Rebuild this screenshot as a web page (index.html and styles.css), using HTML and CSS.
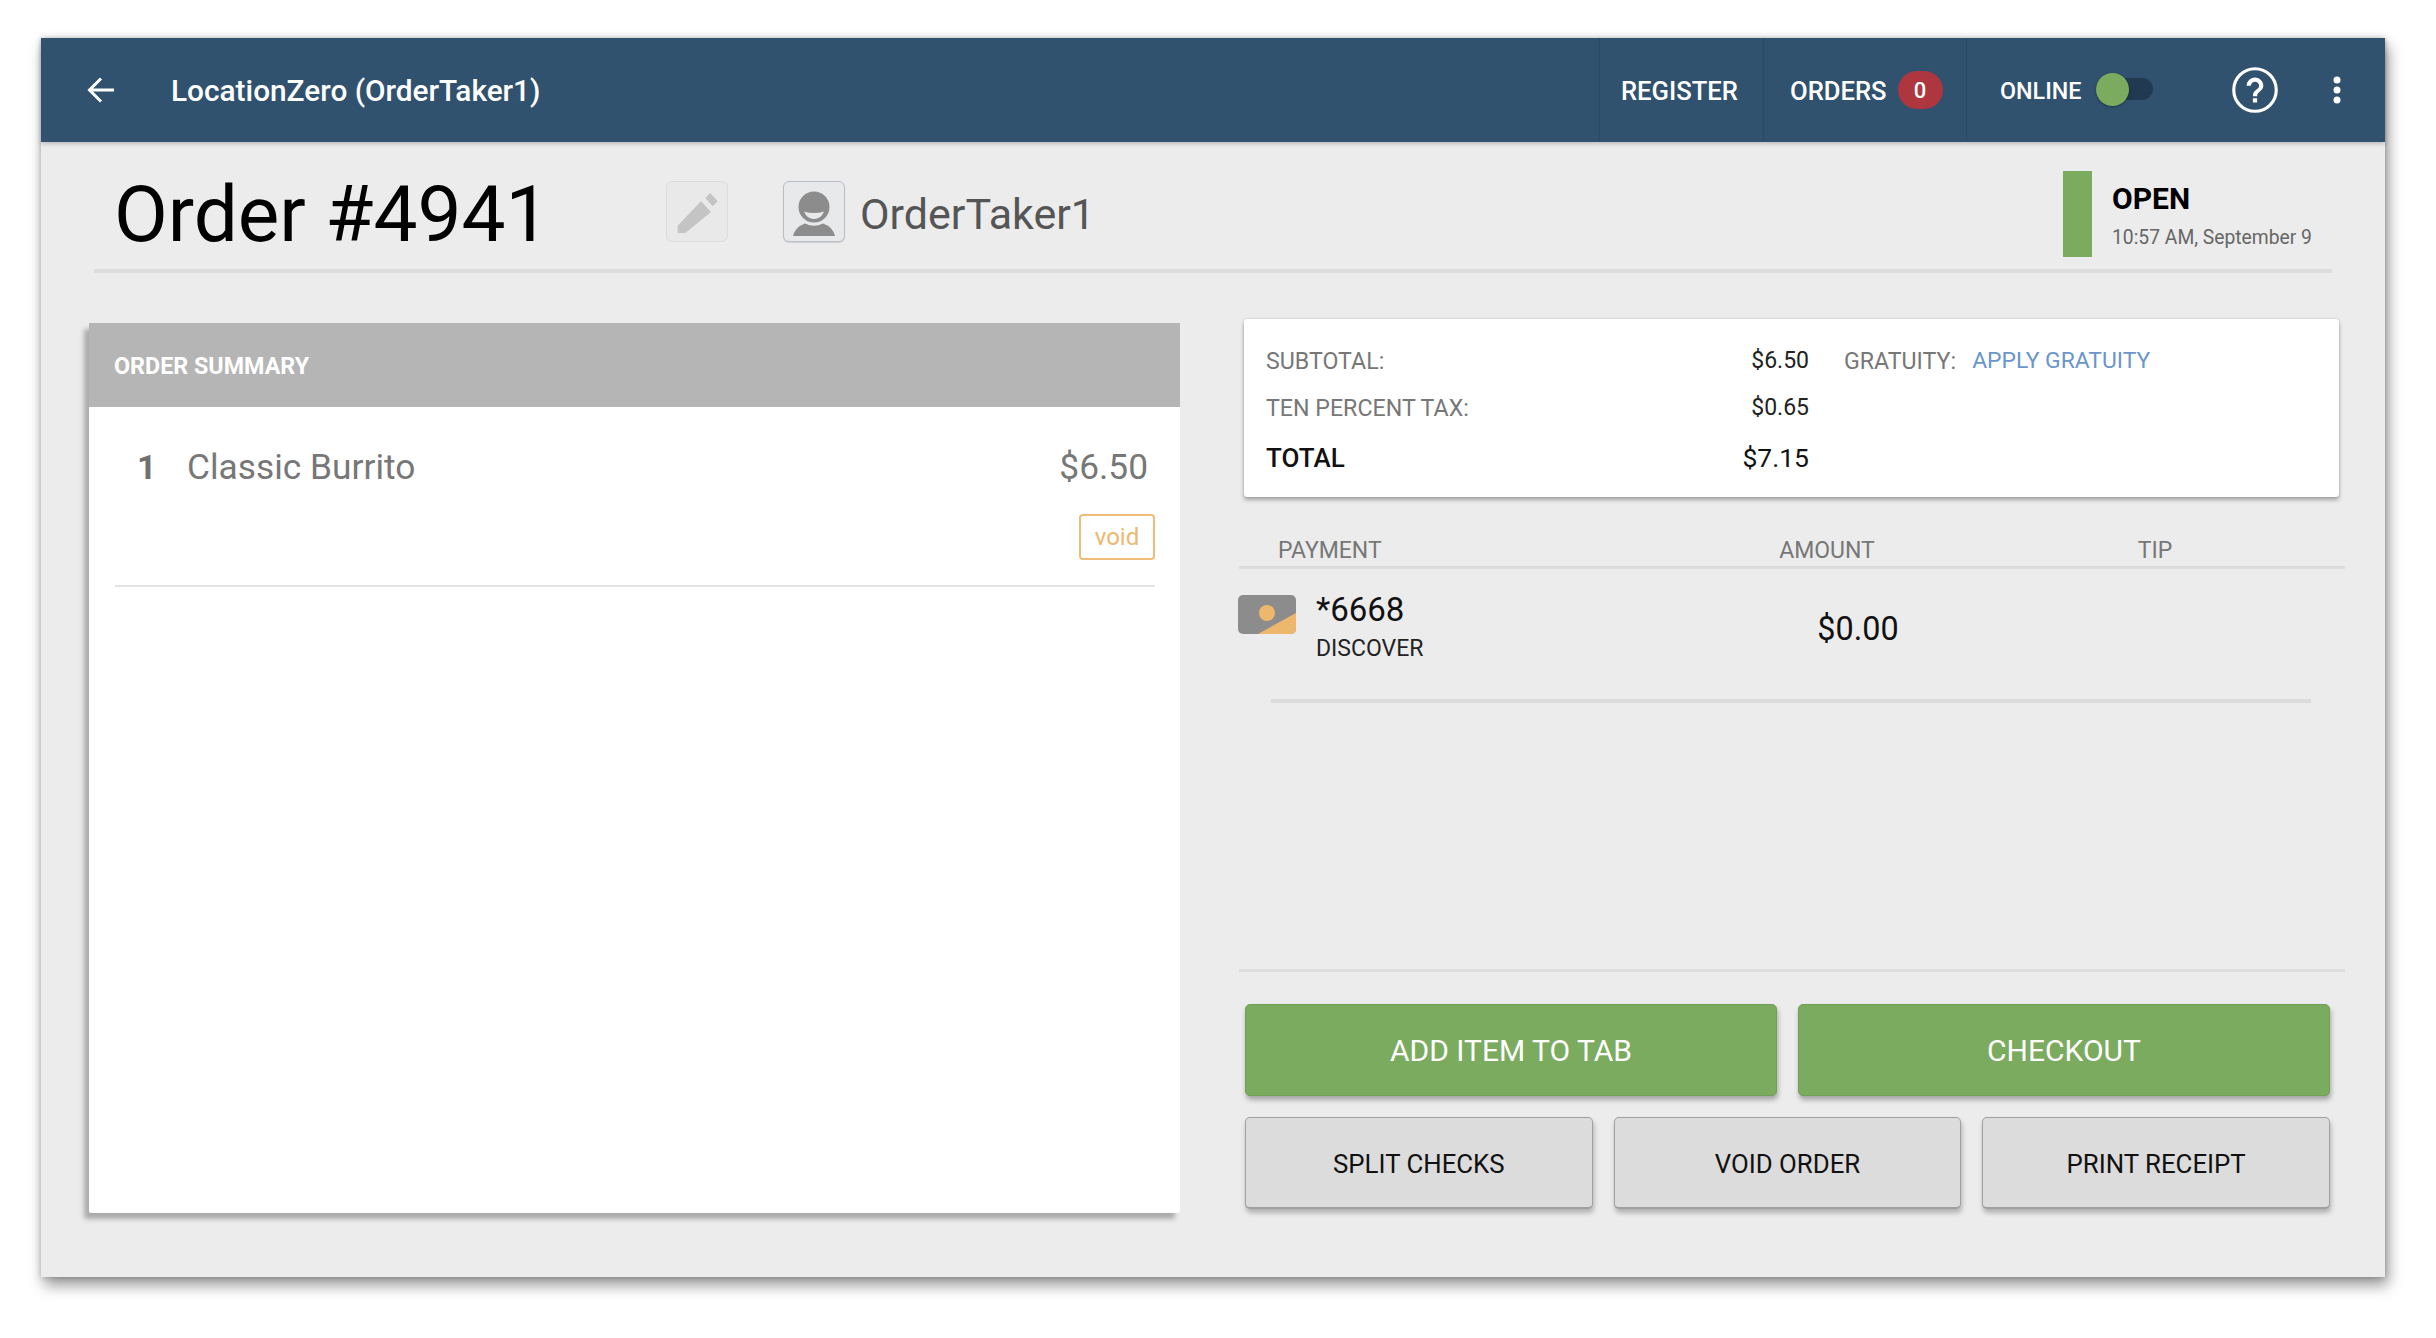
FILE: index.html
```html
<!DOCTYPE html>
<html lang="en">
<head>
<meta charset="utf-8">
<title>Order #4941</title>
<link rel="stylesheet" href="styles.css">
</head>
<body>
<div class="window">
  <header class="topbar">
    <svg class="back" viewBox="0 0 28 26" width="28" height="26"><path d="M27 13H3M14 1.5 2.5 13 14 24.500" fill="none" stroke="#fff" stroke-width="3"/></svg>
    <div class="app-title">LocationZero (OrderTaker1)</div>
    <div class="nav-cell nav-register">REGISTER</div>
    <div class="nav-cell nav-orders">ORDERS <span class="badge">0</span></div>
    <div class="nav-cell nav-online">
      <span>ONLINE</span>
      <span class="toggle"><span class="thumb"></span></span>
      <svg class="help" viewBox="0 0 24 24" width="50" height="50"><circle cx="12" cy="12" r="10.200" fill="none" stroke="#fff" stroke-width="1.500"/><path fill="#fff" d="M11 18h2v-2h-2v2zM12 6c-2.210 0-4 1.790-4 4h2c0-1.100.9-2 2-2s2 .9 2 2c0 2-3 1.750-3 5h2c0-2.250 3-2.500 3-5 0-2.210-1.790-4-4-4z"/></svg>
      <svg class="kebab" viewBox="0 0 8 28" width="8" height="28"><circle cx="4" cy="4" r="3.500" fill="#fff"/><circle cx="4" cy="14" r="3.500" fill="#fff"/><circle cx="4" cy="24" r="3.500" fill="#fff"/></svg>
    </div>
  </header>

  <section class="order-head">
    <h1 class="order-no">Order #4941</h1>
    <div class="icon-btn pencil">
      <svg viewBox="0 0 60 59" width="60" height="59"><path fill="#c4c4c4" d="M10.700 43.700 34 19.300 44 30 18.300 51H10.700zM38.300 16 43.300 11 50.700 19.300 45.700 24.300z"/></svg>
    </div>
    <div class="icon-btn user">
      <svg viewBox="0 0 60 59" width="60" height="59"><circle cx="30" cy="25" r="15.500" fill="#8c8c8c"/><path fill="#e8e9eb" d="M20 29.500Q30 32.500 40 29.500Q37 37 30 37Q23 37 20 29.500z"/><path fill="#8c8c8c" d="M9 54Q11 45 21 41.500Q30 46 39 41.500Q49 45 51 54z"/></svg>
    </div>
    <div class="taker">OrderTaker1</div>
    <div class="status">
      <div class="status-bar"></div>
      <div class="status-text">
        <div class="status-open">OPEN</div>
        <div class="status-date">10:57 AM, September 9</div>
      </div>
    </div>
  </section>

  <main class="content">
    <section class="order-card">
      <div class="order-card-head">ORDER SUMMARY</div>
      <div class="item">
        <div class="item-line">
          <span class="qty">1</span>
          <span class="item-name">Classic Burrito</span>
          <span class="item-price">$6.50</span>
        </div>
        <div class="item-actions"><span class="void">void</span></div>
      </div>
    </section>

    <section class="side">
      <div class="totals">
        <div class="t-label">SUBTOTAL:</div><div class="t-value">$6.50</div>
        <div class="t-gratuity"><span class="t-label">GRATUITY:</span><span class="apply">APPLY GRATUITY</span></div>
        <div class="t-label">TEN PERCENT TAX:</div><div class="t-value">$0.65</div><div></div>
        <div class="t-total">TOTAL</div><div class="t-value t-total-value">$7.15</div><div></div>
      </div>

      <div class="pay-head">
        <div class="ph-payment">PAYMENT</div>
        <div class="ph-center">AMOUNT</div>
        <div></div>
        <div class="ph-center">TIP</div>
      </div>

      <div class="pay-row">
        <div class="pay-method">
          <svg class="card-icon" viewBox="0 0 58 39" width="58" height="39"><rect width="58" height="39" rx="5" fill="#8c8c8c"/><path fill="#eeb76e" d="M20 39 58 18V34a5 5 0 0 1-5 5z"/><circle cx="29" cy="18" r="8" fill="#eeb76e"/></svg>
          <div>
            <div class="card-no">*6668</div>
            <div class="card-type">DISCOVER</div>
          </div>
        </div>
        <div class="pay-amount">$0.00</div>
      </div>

      <div class="actions">
        <div class="row-two">
          <div class="btn btn-green">ADD ITEM TO TAB</div>
          <div class="btn btn-green">CHECKOUT</div>
        </div>
        <div class="row-three">
          <div class="btn btn-grey">SPLIT CHECKS</div>
          <div class="btn btn-grey">VOID ORDER</div>
          <div class="btn btn-grey">PRINT RECEIPT</div>
        </div>
      </div>
    </section>
  </main>
</div>
</body>
</html>
```

FILE: styles.css
```css
* { box-sizing: border-box; }
html, body { margin: 0; padding: 0; background: #fff; }
body { font-family: Roboto, "Liberation Sans", sans-serif; width: 2436px; height: 1338px; overflow: hidden; }

.window {
  width: 2344px;
  height: 1239px;
  margin: 38px 0 0 41px;
  background: #ececec;
  box-shadow: 3px 8px 14px rgba(0,0,0,.42), 0 0 6px rgba(0,0,0,.2);
}

/* top bar */
.topbar {
  height: 104px;
  background: #31526f;
  color: #fff;
  display: flex;
  align-items: stretch;
  box-shadow: 0 2px 4px rgba(0,0,0,.2);
}
.back { align-self: center; margin-left: 46px; }
.app-title {
  align-self: center;
  margin-left: 56px;
  flex: 1;
  font-size: 29.800px;
  font-weight: 500;
}
.nav-cell {
  display: flex;
  align-items: center;
  border-left: 1px solid #2b4a66;
  font-size: 25.600px;
  font-weight: 500;
  padding-top: 2px;
}
.nav-register { width: 164px; padding-left: 21px; }
.nav-orders { width: 203px; padding-left: 26px; }
.nav-orders .badge { margin-left: 11px; }
.nav-online { width: 419px; padding-left: 33px; font-size: 23.300px; }
.badge {
  width: 45px;
  height: 38px;
  border-radius: 19px;
  background: #ad363f;
  font-size: 22px;
  display: flex;
  align-items: center;
  justify-content: center;
  margin-top: -2px;
}
.toggle {
  width: 57px;
  height: 22px;
  margin-left: 15px;
  margin-top: -4px;
  border-radius: 11px;
  background: #213a52;
  display: flex;
  align-items: center;
}
.thumb {
  width: 33px;
  height: 33px;
  border-radius: 50%;
  background: #7bab5f;
  box-shadow: 0 1px 3px rgba(0,0,0,.35);
}
.help { margin-left: 77px; margin-top: -3px; }
.kebab { margin-left: 53px; margin-top: -2px; }

/* order head */
.order-head {
  height: 131px;
  width: 2238px;
  margin-left: 53px;
  padding-left: 20px;
  border-bottom: 4px solid #dcdcdc;
  display: flex;
  align-items: flex-start;
}
.order-no {
  margin: 25px 0 0;
  width: 552px;
  font-size: 78.300px;
  line-height: 94px;
  font-weight: 400;
  color: #000;
}
.icon-btn {
  width: 62px;
  height: 61px;
  margin-top: 39px;
  border-radius: 6px;
}
.pencil { border: 1px solid #dcdcdc; background: #e9e9e9; }
.user { margin-left: 55px; border: 1px solid #b9bec5; background: #e8e9eb; box-shadow: 0 1px 1px rgba(0,0,0,.12); }
.taker {
  margin: 44px 0 0 15px;
  font-size: 43px;
  line-height: 56px;
  color: #555;
  flex: 1;
}
.status { display: flex; margin-top: 29px; width: 269px; }
.status-bar { width: 29px; height: 86px; background: #7bab5f; }
.status-text { margin-left: 20px; }
.status-open { font-size: 30px; font-weight: 700; line-height: 36px; margin-top: 10px; color: #000; }
.status-date { font-size: 19.300px; line-height: 24px; margin-top: 9px; color: #666; white-space: nowrap; }

/* main */
.content { display: flex; align-items: flex-start; margin-top: 46px; }
.order-card {
  width: 1091px;
  height: 890px;
  margin: 4px 0 0 48px;
  background: #fff;
  border-radius: 2px;
  box-shadow: -5px 6px 5px rgba(0,0,0,.28);
}
.order-card-head {
  height: 84px;
  background: #b5b5b5;
  color: #fff;
  font-size: 23.300px;
  font-weight: 700;
  line-height: 86px;
  padding-left: 25px;
}
.item { margin: 0 25px 0 26px; height: 180px; border-bottom: 2px solid #e4e4e4; }
.item-line { display: flex; align-items: baseline; padding-top: 40px; color: #777; font-size: 35.300px; line-height: 40px; }
.qty { font-weight: 700; font-size: 34px; width: 72px; padding-left: 22px; color: #707070; }
.item-name { flex: 1; }
.item-price { margin-right: 7px; }
.item-actions { display: flex; justify-content: flex-end; margin-top: 27px; }
.void {
  width: 76px;
  height: 46px;
  border: 2px solid #f0bd78;
  border-radius: 4px;
  color: #eeb76e;
  font-size: 24px;
  line-height: 43px;
  text-align: center;
}

/* side */
.side { width: 1106px; height: 890px; margin-left: 59px; display: flex; flex-direction: column; }
.totals {
  width: 1095px;
  height: 178px;
  margin-left: 5px;
  padding: 18px 0 0 22px;
  background: #fff;
  border-radius: 3px;
  box-shadow: 0 3px 4px rgba(0,0,0,.3), 0 0 2px rgba(0,0,0,.2);
  display: grid;
  grid-template-columns: 460px 83px 1fr;
  grid-template-rows: 47px 47px 53px;
  align-items: center;
}
.t-label { font-size: 23.200px; color: #777; }
.t-value { font-size: 23px; color: #222; text-align: right; }
.t-gratuity { padding-left: 35px; display: flex; gap: 16px; }
.apply { font-size: 22.900px; color: #6b95cc; }
.t-total { font-size: 26px; font-weight: 500; color: #111; }
.t-total-value { font-size: 26.500px; color: #111; }

.pay-head {
  margin-top: 31px;
  height: 41px;
  padding-top: 8px;
  border-bottom: 3px solid #dcdcdc;
  display: grid;
  grid-template-columns: 488px 200px 128px 200px 90px;
  align-items: center;
  font-size: 23px;
  color: #777;
  line-height: 30px;
}
.ph-payment { padding-left: 39px; }
.ph-center { text-align: center; }

.pay-row {
  height: 134px;
  margin: 0 34px 0 32px;
  border-bottom: 4px solid #dcdcdc;
  display: grid;
  grid-template-columns: 487px 200px;
  align-items: start;
}
.pay-method { display: flex; margin-left: -33px; padding-top: 20px; }
.card-icon { margin: 6px 20px 0 0; }
.card-no { font-size: 33px; line-height: 42px; color: #111; }
.card-type { font-size: 23px; line-height: 28px; margin-top: 4px; color: #222; }
.pay-amount { font-size: 32.400px; line-height: 40px; padding-top: 40px; text-align: center; color: #111; }

.actions { margin-top: auto; height: 240px; border-top: 3px solid #dcdcdc; padding: 32px 15px 0 6px; }
.row-two { display: grid; grid-template-columns: 1fr 1fr; gap: 21px; }
.row-three { display: grid; grid-template-columns: repeat(3, 1fr); gap: 21px; margin-top: 21px; }
.btn { display: flex; align-items: center; justify-content: center; border-radius: 5px; }
.btn-green {
  height: 92px;
  background: #7bab5f;
  color: #fff;
  font-size: 30px;
  border: 1px solid #70a055;
  box-shadow: 1px 4px 5px rgba(0,0,0,.3);
}
.btn-grey {
  height: 92px;
  padding-top: 2px;
  background: #dcdcdc;
  color: #111;
  font-size: 25.800px;
  border: 1px solid #a0a0a0;
  border-bottom-width: 2px;
  box-shadow: 1px 4px 5px rgba(0,0,0,.25);
}
```
